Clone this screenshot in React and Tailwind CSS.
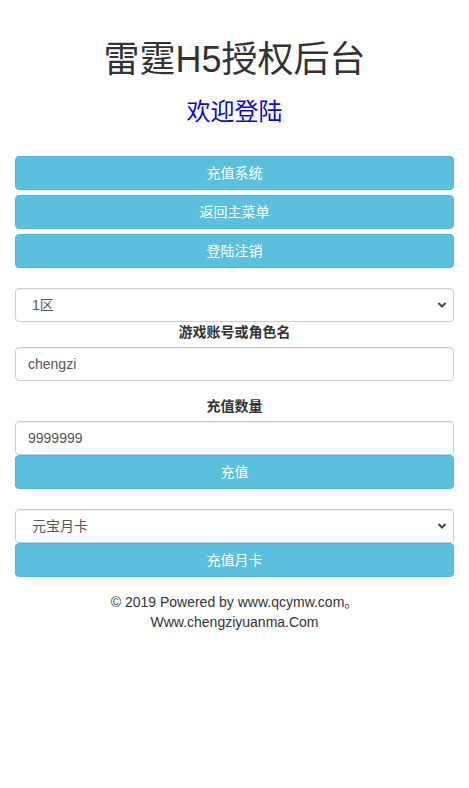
import React from "react";

const font = { fontFamily: '"Liberation Sans", Arial, "Noto Sans CJK SC", sans-serif' };

function Btn({ children }) {
  return (
    <button className="block w-full h-[34px] rounded-[4px] bg-[#5bc0de] border border-[#46b8da] text-white text-[14px] leading-[20px] text-center">
      {children}
    </button>
  );
}

function Select({ value }) {
  return (
    <div className="relative w-full h-[34px]">
      <div className="w-full h-[34px] rounded-[4px] border border-[#ccc] bg-white shadow-[inset_0_1px_1px_rgba(0,0,0,0.075)] pl-[16px] flex items-center text-[14px] text-[#555]">
        {value}
      </div>
      <svg className="absolute right-[7px] top-[13px]" width="10" height="8" viewBox="0 0 10 8">
        <path d="M1.5 2 L5 5.5 L8.5 2" fill="none" stroke="#444" strokeWidth="2" />
      </svg>
    </div>
  );
}

function Input({ value }) {
  return (
    <div className="w-full h-[34px] rounded-[4px] border border-[#ccc] bg-white shadow-[inset_0_1px_1px_rgba(0,0,0,0.075)] pl-[12px] flex items-center text-[14px] text-[#555]">
      {value}
    </div>
  );
}

export default function App() {
  return (
    <div className="w-[469px] min-h-[788px] bg-white text-[#333] px-[15px]" style={font}>
      <h1 className="pt-[40px] text-[36px] leading-[40px] text-center text-[#333]">雷霆H5授权后台</h1>
      <div className="mt-[19px] text-[24px] leading-[26px] text-center text-[#0a0acc]">欢迎登陆</div>
      <div className="mt-[31px] flex flex-col gap-[5px]">
        <Btn>充值系统</Btn>
        <Btn>返回主菜单</Btn>
        <Btn>登陆注销</Btn>
      </div>
      <div className="mt-[20px]">
        <Select value="1区" />
      </div>
      <div className="text-center font-bold text-[14px] leading-[20px] mb-[5px]">游戏账号或角色名</div>
      <Input value="chengzi" />
      <div className="mt-[15px] text-center font-bold text-[14px] leading-[20px] mb-[5px]">充值数量</div>
      <Input value="9999999" />
      <Btn>充值</Btn>
      <div className="mt-[20px]">
        <Select value="元宝月卡" />
      </div>
      <Btn>充值月卡</Btn>
      <div className="mt-[15px] text-center text-[14px] leading-[20px] text-[#333]">
        <div>© 2019 Powered by www.qcymw.com。</div>
        <div>Www.chengziyuanma.Com</div>
      </div>
    </div>
  );
}
